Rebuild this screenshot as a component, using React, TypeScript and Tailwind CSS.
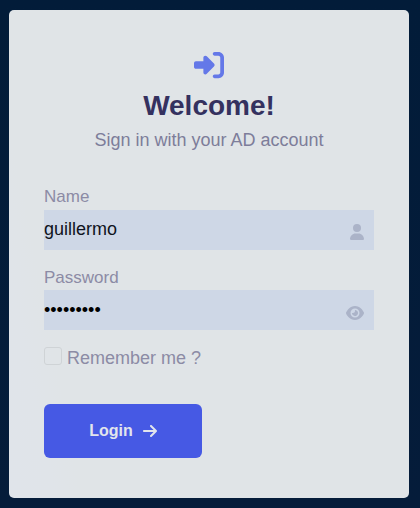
import { useState } from "react";
import { FaArrowRight, FaEye, FaRightToBracket, FaUser } from "react-icons/fa6";

export default function App() {
  const [name, setName] = useState("guillermo");
  const [password, setPassword] = useState("sunflower");

  return (
    <div className="h-[508px] w-[420px] bg-linear-to-b from-[#021c39] to-[#051c3a] px-[9px] py-2.5 font-['Liberation_Sans',Arial,sans-serif]">
      <form
        onSubmit={(e) => e.preventDefault()}
        className="flex h-[488px] w-[400px] flex-col rounded-[5px] bg-[#e0e4e7] bg-linear-[79deg,#e0e4ea_0%,#e0e4e9_9%,#e0e4e7_15%] px-[35px]"
      >
        <header className="flex flex-col items-center pt-[39.5px]">
          <FaRightToBracket className="size-[30px] text-[#6478e8]" />
          <h1 className="mt-[-0.5px] h-[42px] text-[28px] leading-[54px] font-bold text-[#34315f]">Welcome!</h1>
          <p className="mt-[7px] text-[18px] leading-6 text-[#7d7d9a]">Sign in with your AD account</p>
        </header>

        <label htmlFor="name" className="mt-8 flex h-[26px] items-start text-[17px] leading-[25px] text-[#8c8ba5]">
          Name
        </label>
        <div className="flex h-10 bg-[#ced7e6] pr-2.5">
          <input
            id="name"
            value={name}
            onChange={(e) => setName(e.target.value)}
            className="min-w-0 flex-1 bg-transparent pb-0.5 text-[18px] text-[#10131c] outline-none"
          />
          <FaUser className="mt-3.5 h-4 w-3.5 text-[#abb3c8]" />
        </div>

        <label htmlFor="password" className="mt-[15px] flex h-[25px] items-center pt-px text-[17px] leading-6 text-[#8c8ba5]">
          Password
        </label>
        <div className="flex h-10 bg-[#ced7e6] pr-2.5">
          <input
            id="password"
            type="password"
            value={password}
            onChange={(e) => setPassword(e.target.value)}
            className="min-w-0 flex-1 bg-transparent text-[18px] text-black outline-none"
          />
          <FaEye className="mt-[15px] h-4 w-[18px] text-[#abb3c8]" />
        </div>

        <label className="mt-[17px] flex h-[22px] text-[18px] leading-[22px] text-[#8c8ba5]">
          <input
            type="checkbox"
            className="mr-[5px] size-[18px] appearance-none rounded-[3px] border border-[#cfd3d6]"
          />
          Remember me ?
        </label>

        <button className="mt-[35px] flex h-[54px] w-[158px] items-center justify-center gap-2.5 rounded-md bg-[#4659e4] text-base font-bold text-[#e2e5ec]">
          Login
          <FaArrowRight className="h-4 w-3.5" />
        </button>
      </form>
    </div>
  );
}
